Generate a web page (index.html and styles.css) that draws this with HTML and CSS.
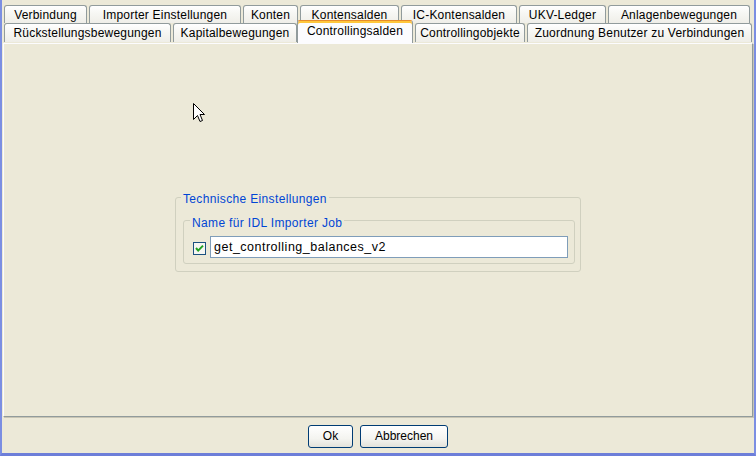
FILE: index.html
```html
<!DOCTYPE html>
<html>
<head>
<meta charset="utf-8">
<link rel="stylesheet" href="styles.css">
</head>
<body>
<div class="window">
  <div class="tabs">
    <div class="tab-row row1">
      <div class="tab w-verb">Verbindung</div>
      <div class="tab w-imp">Importer Einstellungen</div>
      <div class="tab w-kon">Konten</div>
      <div class="tab w-ks">Kontensalden</div>
      <div class="tab w-ic">IC-Kontensalden</div>
      <div class="tab w-ukv">UKV-Ledger</div>
      <div class="tab w-anl">Anlagenbewegungen</div>
    </div>
    <div class="tab-row row2">
      <div class="tab w-rue">Rückstellungsbewegungen</div>
      <div class="tab w-kap">Kapitalbewegungen</div>
      <div class="tab selected w-cs">Controllingsalden</div>
      <div class="tab w-co">Controllingobjekte</div>
      <div class="tab w-zu">Zuordnung Benutzer zu Verbindungen</div>
    </div>
  </div>
  <div class="panel">
    <svg class="cursor" width="12" height="20" viewBox="0 0 12 20">
      <path d="M0.5 0.5 L0.5 16.5 L4.5 12.5 L7 18.5 L9.5 17.5 L7 11.5 L11.5 11.5 Z" fill="#fff" stroke="#000" stroke-width="1"/>
    </svg>
    <div class="group outer">
      <span class="group-title">Technische Einstellungen</span>
      <div class="group inner">
        <span class="group-title">Name für IDL Importer Job</span>
        <div class="field-row">
          <svg class="checkbox" width="13" height="13" viewBox="0 0 13 13">
            <rect x="0.5" y="0.5" width="12" height="12" fill="#f6f6f2" stroke="#1c5180"/>
            <path d="M3 6 L5.2 8.6 L10 3.6" fill="none" stroke="#21a121" stroke-width="2"/>
          </svg>
          <div class="text-input">get_controlling_balances_v2</div>
        </div>
      </div>
    </div>
  </div>
  <div class="buttons">
    <button class="btn btn-ok">Ok</button>
    <button class="btn btn-cancel">Abbrechen</button>
  </div>
</div>
</body>
</html>
```
FILE: styles.css
```css
* { box-sizing: border-box; }
html, body {
  margin: 0;
  padding: 0;
  background: #ece9d8;
}
body {
  font-family: "Liberation Sans", Arial, sans-serif;
  font-size: 12px;
  color: #000;
}
.window {
  width: 756px;
  height: 456px;
  background: #ece9d8;
  border-left: 2px solid #7b8ee2;
  border-right: 2px solid #7b8ee2;
  border-bottom: 3px solid #6d7ed9;
  padding-top: 5px;
  display: flex;
  flex-direction: column;
}
.tabs {
  padding-left: 2px;
}
.tab-row {
  display: flex;
  gap: 2px;
}
.tab {
  border: 1px solid #919b9c;
  border-bottom: none;
  border-radius: 3px 3px 0 0;
  background: linear-gradient(#ffffff, #f7f7f4 40%, #efeee8);
  text-align: center;
  white-space: nowrap;
  letter-spacing: 0.2px;
}
.row1 .tab {
  height: 18px;
  line-height: 17px;
  padding-top: 1px;
}
.row2 .tab {
  height: 19px;
  line-height: 18px;
}
.tab.selected {
  position: relative;
  z-index: 2;
  margin-top: -3px;
  margin-left: -2px;
  height: 23px;
  border-top: 1px solid #e68b2c;
  box-shadow: inset 0 2px 0 #ffc73c;
  background: #fcfcfe;
  padding-top: 1px;
}
.w-verb { width: 83px; }
.w-imp { width: 152px; }
.w-kon { width: 55px; }
.w-ks { width: 99px; }
.w-ic { width: 116px; }
.w-ukv { width: 87px; }
.w-anl { width: 142px; }
.w-rue { width: 167px; }
.w-kap { width: 124px; }
.w-cs { width: 116px; }
.w-co { width: 110px; }
.w-zu { width: 225px; }

.panel {
  position: relative;
  z-index: 1;
  height: 374px;
  margin-left: 1px;
  width: 750px;
  border-top: 1px solid #fcfcfe;
  border-left: 1px solid #fcfcfe;
  border-right: 1px solid #919b9c;
  border-bottom: 1px solid #919b9c;
  box-shadow: 1px 1px 0 #c8c5b4;
  display: flex;
  align-items: center;
  justify-content: center;
}
.cursor {
  position: absolute;
  left: 189px;
  top: 59px;
}
.group {
  position: relative;
  border: 1px solid #d0d0bf;
  border-radius: 3px;
}
.group-title {
  position: absolute;
  color: #0046d5;
  line-height: 14px;
  padding: 0 2px;
  background: #ece9d8;
  white-space: nowrap;
  letter-spacing: 0.35px;
}
.outer {
  width: 406px;
  height: 75px;
  margin-top: 9px;
  padding: 22px 5px 7px 7px;
}
.outer > .group-title {
  left: 5px;
  top: -6px;
}
.inner {
  width: 392px;
  height: 44px;
  padding: 15px 6px 5px 9px;
}
.inner > .group-title {
  left: 6px;
  top: -5px;
}
.field-row {
  display: flex;
  align-items: center;
  gap: 4px;
}
.checkbox {
  flex: none;
  margin-top: 2px;
}
.text-input {
  width: 358px;
  height: 22px;
  border: 1px solid #7f9db9;
  background: #fff;
  padding-left: 3px;
  line-height: 20px;
  white-space: nowrap;
  font-size: 12.5px;
  letter-spacing: 0.5px;
}
.buttons {
  flex: 1;
  display: flex;
  justify-content: center;
  align-items: flex-start;
  gap: 7px;
  padding-top: 8px;
}
.btn {
  height: 23px;
  border: 1px solid #003c74;
  border-radius: 3px;
  background: linear-gradient(#ffffff, #f4f4f0 60%, #e3e2da);
  font-family: "Liberation Sans", Arial, sans-serif;
  font-size: 12px;
  color: #000;
  padding: 0;
  line-height: 21px;
}
.btn-ok { width: 45px; }
.btn-cancel { width: 88px; }
```
